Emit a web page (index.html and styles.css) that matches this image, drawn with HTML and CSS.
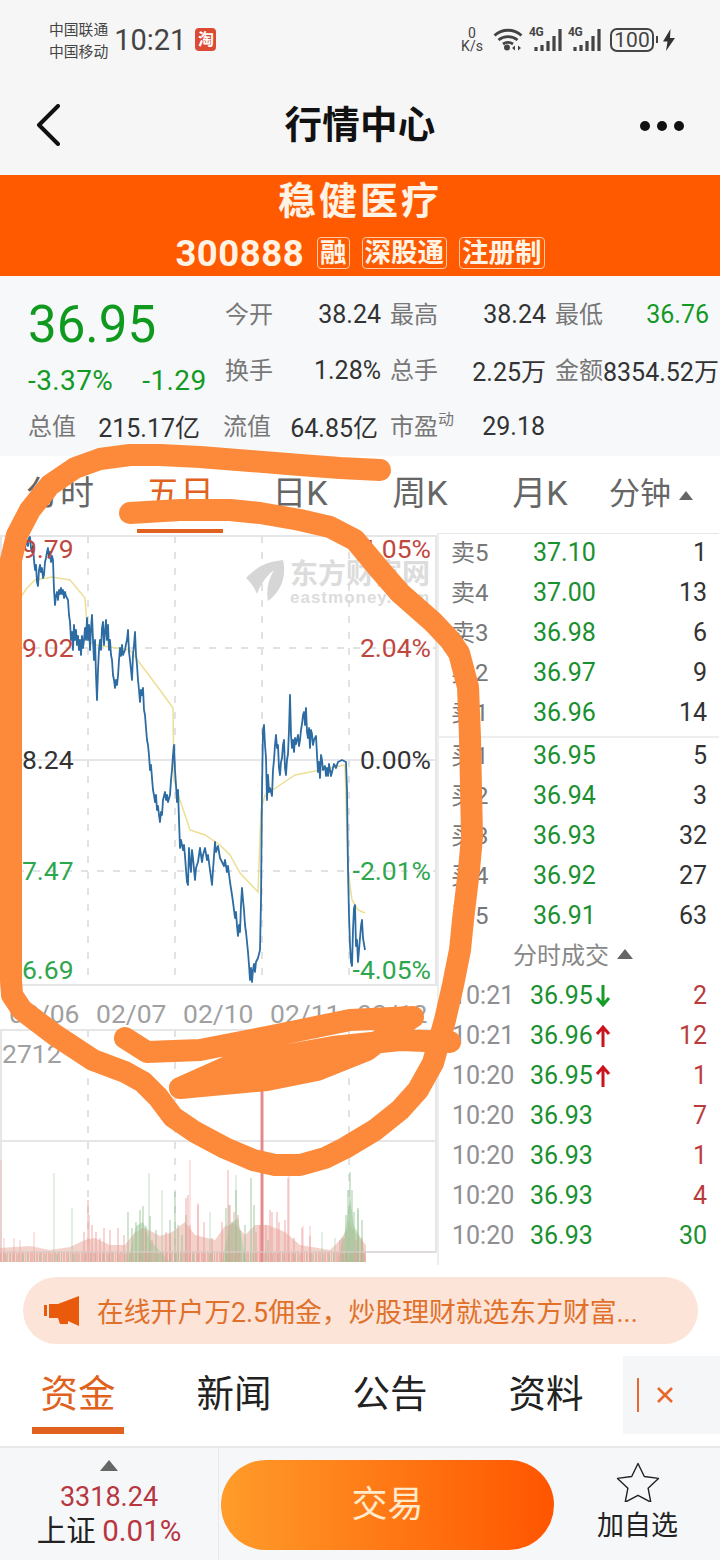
FILE: index.html
```html
<!DOCTYPE html>
<html lang="zh-CN">
<head>
<meta charset="utf-8">
<title>行情中心</title>
<link rel="stylesheet" href="styles.css">
</head>
<body>
<div class="page">
  <header class="status">
    <div class="carriers"><span>中国联通</span><span>中国移动</span></div>
    <div class="clock">10:21</div>
    <div class="tao">淘</div>
    <div class="status-right">
      <div class="speed"><span>0</span><span>K/s</span></div>
      <svg class="wifi" viewBox="0 0 30 23" width="30" height="23"><path d="M1.500 7.500C9 .5 21 .5 28.500 7.500M5.500 12C11 7.500 19 7.500 24.500 12M10 16C13 14 17 14 20 16" fill="none" stroke="#444" stroke-width="2.800"/><circle cx="14" cy="19.500" r="3" fill="#444"/><path d="M22 17.500l-3 2.500 3 2.500zM25 17.500l3 2.500-3 2.500z" fill="#444"/></svg>
      <div class="signal"><span class="g4">4G</span><svg viewBox="0 0 33 23" width="33" height="23"><path d="M7 23v-4M13 23v-6M19 23v-10M25 23v-15M31 23V1" stroke="#444" stroke-width="3.200" fill="none"/></svg></div>
      <div class="signal"><span class="g4">4G</span><svg viewBox="0 0 33 23" width="33" height="23"><path d="M7 23v-4M13 23v-6M19 23v-10M25 23v-15M31 23V1" stroke="#444" stroke-width="3.200" fill="none"/></svg></div>
      <div class="battery">100</div><div class="nub"></div>
      <svg class="bolt" viewBox="0 0 12 22" width="12" height="22"><path d="M7.500 0L0 12.500h4.500L3 22l9-13H7z" fill="#333"/></svg>
    </div>
  </header>

  <nav class="nav">
    <svg class="back" viewBox="0 0 24 42" width="24" height="42"><path d="M22 2L3 21l19 19" fill="none" stroke="#111" stroke-width="4" stroke-linecap="round" stroke-linejoin="round" /></svg>
    <h1 class="title">行情中心</h1>
    <div class="dots"><i></i><i></i><i></i></div>
  </nav>

  <section class="stock">
    <div class="stock-name">稳健医疗</div>
    <div class="stock-sub"><span class="code">300888</span><span class="badge">融</span><span class="badge">深股通</span><span class="badge">注册制</span></div>
  </section>

  <section class="quote">
    <div class="quote-top">
      <div class="price-box">
        <div class="price">36.95</div>
        <div class="change"><span>-3.37%</span><span>-1.29</span></div>
      </div>
      <div class="stats">
        <div class="stat"><label>今开</label><b>38.24</b></div>
        <div class="stat"><label>最高</label><b>38.24</b></div>
        <div class="stat last"><label>最低</label><b class="up">36.76</b></div>
        <div class="stat"><label>换手</label><b>1.28%</b></div>
        <div class="stat"><label>总手</label><b>2.25万</b></div>
        <div class="stat over"><label>金额</label><b>8354.52万</b></div>
      </div>
    </div>
    <div class="quote-bottom">
      <div class="stat s1"><label>总值</label><b>215.17亿</b></div>
      <div class="stat s2"><label>流值</label><b>64.85亿</b></div>
      <div class="stat s3"><label>市盈<sup>动</sup></label><b>29.18</b></div>
    </div>
  </section>

  <div class="tabs">
    <div class="tab">分时</div>
    <div class="tab active">五日</div>
    <div class="tab">日K</div>
    <div class="tab">周K</div>
    <div class="tab">月K</div>
    <div class="tab more">分钟<i class="tri"></i></div>
  </div>

  <main class="main">
    <svg class="chart" viewBox="0 533 438 732" width="438" height="732">
      <g class="grid">
        <rect x="1" y="536" width="435" height="449"/>
        <rect x="1" y="1030" width="435" height="222"/>
        <path d="M1 760H436M1 1141H436"/>
      </g>
      <path class="dash" d="M88 536V985M175 536V985M262 536V985M349 536V985M1 648H436M1 871H436M88 1030V1252M175 1030V1252M262 1030V1252M349 1030V1252"/>
      <g class="mark">
        <path d="M246 578C256 568 264 562 283 560C287 576 281 592 268 601C266 590 268 580 274 570C264 578 259 588 257 594C254 586 250 582 246 578Z"/>
        <text class="mark-cn" x="290" y="584">东方财富网</text>
        <text class="mark-en" x="290" y="603">eastmoney.com</text>
      </g>
      <polyline class="avg" points="20,598 27,588 35,580 52,577 70,580 85,598 88,640 95,645 110,647 130,650 145,670 160,690 173,708 174,780 180,800 190,830 205,835 220,845 230,855 240,873 258,892 261,810 265,795 280,785 295,775 320,770 345,765 348,870 352,900 358,910 365,913"/>
      <polyline class="line" points="20,570 21,560 22,555 23,542 24,538 25,548 26,544 27,540 28,546 29,538 30,537 31,548 32,552 33,546 34,560 35,570 36,565 37,582 38,586 39,570 40,565 41,572 42,568 43,578 44,575 45,562 46,558 47,552 48,548 49,558 50,552 51,562 52,556 53,560 54,590 55,605 56,596 57,592 58,600 59,590 60,594 61,588 62,594 63,590 64,598 65,592 66,596 68,600 69,615 70,622 71,640 72,632 73,650 74,625 75,640 76,630 77,645 78,636 79,650 80,640 81,655 82,636 83,648 84,640 85,628 86,640 87,618 88,640 89,625 90,650 91,628 92,615 93,640 94,660 95,640 96,675 97,700 98,670 99,650 100,640 101,650 102,628 103,622 104,645 105,632 106,620 107,640 108,625 109,650 110,640 111,655 112,660 113,675 114,680 115,688 116,680 117,685 118,676 119,660 120,648 121,656 122,645 123,655 125,650 126,644 127,640 128,630 129,652 130,660 131,670 132,680 133,655 134,645 135,632 136,655 137,665 138,680 139,690 140,702 141,690 142,695 143,688 144,710 145,715 146,728 147,740 148,745 149,755 150,770 151,765 152,778 153,790 154,795 155,802 156,795 157,810 158,806 159,815 160,822 161,812 162,815 163,800 165,792 166,800 167,795 168,802 170,795 171,780 172,770 173,755 174,745 175,770 176,785 177,802 178,790 179,820 180,848 181,840 183,850 184,845 185,856 186,870 187,882 188,885 189,848 190,862 191,872 192,850 193,858 195,880 196,868 198,862 200,848 202,862 203,855 205,848 207,860 208,855 210,870 212,885 213,870 214,856 215,842 216,852 218,846 220,858 222,862 224,866 225,860 227,872 228,866 230,882 232,895 233,902 235,918 236,912 237,926 238,936 239,925 240,932 241,905 242,888 243,900 244,910 245,925 246,932 248,952 249,965 250,980 251,968 252,982 253,970 254,964 255,972 256,962 258,958 260,950 261,900 262,790 263,730 264,725 265,745 266,758 267,800 268,775 269,792 270,788 272,796 273,770 274,760 275,745 276,735 277,748 278,745 279,768 280,775 281,762 282,758 283,745 284,740 285,768 286,775 287,760 288,754 289,730 290,695 291,735 292,748 293,740 294,752 295,738 296,744 298,735 299,746 300,740 301,730 302,724 303,715 304,712 305,725 306,708 307,732 308,738 309,728 310,748 311,730 312,734 313,745 314,740 316,736 317,755 318,772 319,762 320,778 321,755 322,760 323,770 325,766 326,776 327,768 328,776 329,764 330,770 331,776 333,768 334,764 336,768 338,762 342,760 346,762 347,790 348,870 349,915 350,945 351,962 352,966 353,930 354,908 355,905 356,946 357,940 358,962 359,950 360,938 361,926 362,920 363,938 364,944 365,950"/>
      <polygon class="hills-r" points="0,1262 0,1248 30,1246 50,1250 70,1247 85,1240 95,1238 110,1245 125,1245 135,1232 145,1228 160,1236 172,1232 185,1222 195,1235 215,1240 225,1226 235,1224 245,1235 255,1225 268,1225 285,1232 300,1245 330,1250 340,1240 350,1225 358,1236 366,1245 366,1262"/>
      <polygon class="hills-g" points="128,1262 136,1226 143,1222 150,1240 170,1262 222,1262 230,1224 238,1218 246,1262 338,1262 346,1226 350,1198 354,1226 362,1240 366,1262"/>
      <path class="vol-base" d="M0 1257H366"/>
      <path class="vol-base2" d="M0 1258H366"/>
      <path class="hill-g" d="M128 1262V1212M132 1262V1228M136 1262V1222M140 1262V1210M143 1262V1206M146 1262V1226M150 1262V1216M156 1262V1230M170 1262V1220M175 1262V1192M178 1262V1225M182 1262V1235M186 1262V1215M226 1262V1208M229 1262V1205M232 1262V1222M236 1262V1190M240 1262V1230M245 1262V1225M251 1262V1178M254 1262V1205M268 1262V1240M342 1262V1238M346 1262V1215M348 1262V1190M350 1262V1172M352 1262V1190M354 1262V1212M358 1262V1208M362 1262V1220"/>
      <path class="hill-r" d="M84 1262V1232M88 1262V1200M89 1262V1215M92 1262V1225M96 1262V1232M100 1262V1238M104 1262V1228M110 1262V1230M118 1262V1228M124 1262V1235M142 1262V1228M146 1262V1232M152 1262V1240M166 1262V1232M170 1262V1235M186 1262V1198M188 1262V1195M190 1262V1225M198 1262V1205M204 1262V1222M212 1262V1238M222 1262V1222M228 1262V1170M230 1262V1205M234 1262V1212M238 1262V1215M256 1262V1232M260 1262V1225M266 1262V1225M270 1262V1210M272 1262V1212M277 1262V1212M279 1262V1222M285 1262V1220M288 1262V1178M294 1262V1238M302 1262V1228M310 1262V1236M340 1262V1240M344 1262V1238M356 1262V1240M362 1262V1238"/>
      <path class="thin-g" d="M54 1262V1173M72 1262V1208M149 1262V1173M162 1262V1190M210 1262V1212M236 1262V1175M322 1262V1232M335 1262V1238M358 1262V1210"/>
      <path class="thin-r" d="M1 1262V1160M4 1262V1238M14 1262V1238M20 1262V1240M34 1262V1232M190 1262V1160M198 1262V1203M303 1262V1226M310 1262V1226M289 1262V1176"/>
      <path class="vol-spike" d="M262 1262V1090"/>
      <path class="vol-line" d="M1 1252H436"/>
      <text class="lbl red" x="7" y="558">39.79</text>
      <text class="lbl red" x="7" y="657">39.02</text>
      <text class="lbl dark" x="7" y="769">38.24</text>
      <text class="lbl green" x="7" y="880">37.47</text>
      <text class="lbl green" x="7" y="979">36.69</text>
      <text class="lbl red end" x="431" y="558">4.05%</text>
      <text class="lbl red end" x="431" y="657">2.04%</text>
      <text class="lbl dark end" x="431" y="769">0.00%</text>
      <text class="lbl green end" x="431" y="880">-2.01%</text>
      <text class="lbl green end" x="431" y="979">-4.05%</text>
      <text class="lbl gray" x="9" y="1023">02/06</text>
      <text class="lbl gray" x="96" y="1023">02/07</text>
      <text class="lbl gray" x="183" y="1023">02/10</text>
      <text class="lbl gray" x="270" y="1023">02/11</text>
      <text class="lbl gray" x="357" y="1023">02/12</text>
      <text class="lbl gray" x="2" y="1063">2712</text>
    </svg>

    <aside class="book">
      <div class="row"><label>卖5</label><b>37.10</b><em>1</em></div>
      <div class="row"><label>卖4</label><b>37.00</b><em>13</em></div>
      <div class="row"><label>卖3</label><b>36.98</b><em>6</em></div>
      <div class="row"><label>卖2</label><b>36.97</b><em>9</em></div>
      <div class="row"><label>卖1</label><b>36.96</b><em>14</em></div>
      <div class="book-sep"></div>
      <div class="row"><label>买1</label><b>36.95</b><em>5</em></div>
      <div class="row"><label>买2</label><b>36.94</b><em>3</em></div>
      <div class="row"><label>买3</label><b>36.93</b><em>32</em></div>
      <div class="row"><label>买4</label><b>36.92</b><em>27</em></div>
      <div class="row"><label>买5</label><b>36.91</b><em>63</em></div>
      <div class="trades-head"><span>分时成交</span><i class="tri"></i></div>
      <div class="trade"><time>10:21</time><b>36.95</b><svg class="arrow" viewBox="0 0 16 24" width="16" height="24"><path d="M8 1V21M2 14l6 7 6-7" fill="none" stroke="#169a2a" stroke-width="3"/></svg><em class="r">2</em></div>
      <div class="trade"><time>10:21</time><b>36.96</b><svg class="arrow" viewBox="0 0 16 24" width="16" height="24"><path d="M8 23V3M2 10l6-7 6 7" fill="none" stroke="#c9141c" stroke-width="3"/></svg><em class="r">12</em></div>
      <div class="trade"><time>10:20</time><b>36.95</b><svg class="arrow" viewBox="0 0 16 24" width="16" height="24"><path d="M8 23V3M2 10l6-7 6 7" fill="none" stroke="#c9141c" stroke-width="3"/></svg><em class="r">1</em></div>
      <div class="trade"><time>10:20</time><b>36.93</b><em class="r">7</em></div>
      <div class="trade"><time>10:20</time><b>36.93</b><em class="r">1</em></div>
      <div class="trade"><time>10:20</time><b>36.93</b><em class="r">4</em></div>
      <div class="trade"><time>10:20</time><b>36.93</b><em class="g">30</em></div>
    </aside>
  </main>

  <div class="promo">
    <svg class="horn" viewBox="0 0 36 30" width="36" height="30"><path d="M0 9h3v11H0zM5 8h9L35 0v30L24 25v3h-8l-2-6H5z" fill="#ea5a0c"/></svg>
    <span>在线开户万2.5佣金&#xFF0C;炒股理财就选东方财富...</span>
  </div>

  <div class="subtabs">
    <div class="subtab active">资金</div>
    <div class="subtab">新闻</div>
    <div class="subtab">公告</div>
    <div class="subtab">资料</div>
    <div class="close"><i></i><svg viewBox="0 0 18 18" width="18" height="18"><path d="M2 2l14 14M16 2L2 16" stroke="#e8692c" stroke-width="2.600" fill="none"/></svg></div>
  </div>

  <footer class="footer">
    <div class="index">
      <i class="tri big"></i>
      <div class="index-val">3318.24</div>
      <div class="index-line">上证 <span>0.01%</span></div>
    </div>
    <div class="trade-wrap"><button class="trade-btn">交易</button></div>
    <div class="fav">
      <svg viewBox="0 0 44 40" width="44" height="40"><path d="M22 1.500l6.300 13 14.200 1.900-10.400 9.800 2.700 14-12.800-6.900-12.800 6.900 2.700-14L1.500 16.400l14.200-1.900z" fill="none" stroke="#222" stroke-width="1.400" stroke-linejoin="round"/></svg>
      <span>加自选</span>
    </div>
  </footer>

  <svg class="scribble" viewBox="0 0 720 1560" width="720" height="1560">
    <path class="ink" d="M380 470L340 468L300 465L250 461L200 457L160 455L130 455L100 459L75 468L50 485L30 510L17 535L11 560V980L12 995L22 1010L55 1035L93 1060L125 1072L143 1082L158 1097L173 1117L195 1132L225 1148L253 1160L275 1165L300 1165L325 1158L345 1148L375 1130L400 1110L418 1090L433 1063L445 1020L453 985L460 950L463 920L469 870L472 837L471 787L470 737L468 687L459 653L450 640L433 622L400 593L380 570L355 540L330 527L300 520L260 513L230 510L180 510L130 513"/>
    <path class="ink" d="M125 1038L147 1052L200 1050L267 1037L350 1020L413 1017L393 1030L367 1050L317 1070L267 1080L180 1088L227 1067L260 1060L333 1047L400 1040L450 1042"/>
  </svg>
</div>
</body>
</html>
```
FILE: styles.css
```css
* { box-sizing: border-box; }
html, body { margin: 0; padding: 0; }
body { background: #fff; font-family: Roboto, "Noto Sans CJK SC", sans-serif; color: #333; }
.page { position: relative; width: 720px; height: 1560px; overflow: hidden; background: #fff; }
label, b, em, time { font-weight: 400; font-style: normal; }

.status { height: 85px; background: #f6f6f6; display: flex; align-items: center; padding: 0 45px 0 49px; color: #444; }
.carriers { display: flex; flex-direction: column; gap: 4px; font-size: 14.800px; line-height: 18px; margin-top: -4px; }
.clock { font-size: 29px; margin-left: 6px; margin-top: -5px; }
.tao { width: 21px; height: 23px; margin-left: 9px; margin-top: -6px; background: #dc4a34; border-radius: 4px; color: #fff; font-size: 16px; line-height: 23px; text-align: center; font-weight: 700; }
.status-right { margin-left: auto; display: flex; align-items: center; margin-top: -6px; }
.speed { display: flex; flex-direction: column; align-items: center; font-size: 14px; line-height: 13px; margin-right: 9px; width: 24px; }
.wifi { margin-right: 6px; }
.signal { position: relative; width: 33px; height: 23px; margin-right: 6px; }
.signal svg { display: block; }
.g4 { position: absolute; left: 0; top: -3px; font-size: 12px; font-weight: 700; letter-spacing: -.5px; line-height: 14px; background: #f6f6f6; }
.battery { width: 44px; height: 24px; margin-left: 3px; border: 2px solid #444; border-radius: 7px; font-size: 21px; line-height: 20px; text-align: center; }
.nub { width: 2px; height: 7px; background: #444; margin: 0 5px 0 2px; }

.nav { height: 90px; background: #f6f6f6; display: flex; align-items: center; justify-content: space-between; padding: 0 36px 10px 36px; position: relative; }
.title { position: absolute; left: 0; right: 0; top: 17px; margin: 0; text-align: center; font-size: 37.500px; line-height: 46px; font-weight: 700; color: #111; letter-spacing: .3px; }
.dots { display: flex; gap: 7px; margin-top: 2px; }
.dots i { width: 10px; height: 10px; border-radius: 50%; background: #111; }

.stock { height: 101px; background: #ff5a00; color: #fff3e6; display: flex; flex-direction: column; align-items: center; }
.stock-name { font-size: 38px; font-weight: 700; line-height: 52px; letter-spacing: 3px; }
.stock-sub { display: flex; align-items: center; gap: 12px; height: 36px; margin-top: 8px; }
.code { font-size: 36.500px; font-weight: 700; letter-spacing: .5px; margin-right: 1px; }
.badge { border: 1px solid #ffc9a6; border-radius: 4px; font-size: 26.500px; font-weight: 700; line-height: 30px; height: 32px; padding: 0 2px; }

.quote { height: 180px; background: #f7f8fa; }
.quote-top { display: flex; height: 122px; }
.price-box { width: 225px; padding-left: 28px; }
.price { font-size: 51px; line-height: 60px; color: #0f9a1f; margin-top: 19px; }
.change { display: flex; gap: 29px; font-size: 28px; line-height: 30px; letter-spacing: .4px; color: #139a25; margin-top: 11px; white-space: nowrap; }
.stats { width: 495px; display: grid; grid-template-columns: 165px 165px 165px; grid-auto-rows: 56px; padding-top: 10px; }
.stat { display: flex; justify-content: space-between; align-items: center; font-size: 25px; color: #333; padding-right: 9px; }
.stat label { font-size: 24px; color: #777; margin-bottom: 4px; }
.stat .up { color: #139a25; }
.stat.last { padding-right: 11px; }
.stat.over { padding-right: 2px; white-space: nowrap; }
.stat sup { font-size: 16px; line-height: 0; vertical-align: 10px; }
.quote-bottom { display: flex; padding-left: 28px; height: 56px; }
.s1 { width: 172px; padding-right: 0; }
.s2 { width: 167px; padding-right: 12px; margin-left: 23px; }
.s3 { width: 155px; padding-right: 0; }

.tabs { height: 77px; display: flex; background: #fff; }
.tab { width: 120px; display: flex; justify-content: center; align-items: center; font-size: 34px; color: #666; position: relative; padding-bottom: 8px; }
.tab.active { color: #e0621e; }
.tab.active::after { content: ""; position: absolute; left: 17px; width: 86px; bottom: 0; height: 4px; background: #e0621e; }
.tab.more { font-size: 31px; gap: 8px; margin-left: -9px; }
.tri { display: inline-block; width: 0; height: 0; border-left: 8px solid transparent; border-right: 8px solid transparent; border-bottom: 10px solid #666; }
.tab .tri { border-left-width: 7px; border-right-width: 7px; border-bottom-width: 9px; margin-top: 10px; }

.main { display: flex; height: 732px; }
.chart { display: block; flex: none; }
.grid rect, .grid path { fill: none; stroke: #e6e6e8; stroke-width: 2; }
.dash { fill: none; stroke: #e2e2e4; stroke-width: 2; stroke-dasharray: 7 9; }
.mark path { fill: #d6d6d6; }
.mark-cn { font-size: 28px; font-weight: 700; fill: #dcdcdc; font-family: "Noto Sans CJK SC", sans-serif; }
.mark-en { font-size: 17px; font-weight: 700; fill: #dcdcdc; letter-spacing: 1px; font-family: "Liberation Sans", sans-serif; }
.line { fill: none; stroke: #2c6ca3; stroke-width: 1.800; stroke-linejoin: round; }
.avg { fill: none; stroke: #ecdf94; stroke-width: 1.500; }
.hills-r { fill: #ecb4aa; opacity: .6; }
.hills-g { fill: #aacfa4; opacity: .6; }
.vol-base { fill: none; stroke: #e89a90; stroke-width: 10; stroke-dasharray: 2 1 3 1 1 1; opacity: .5; }
.vol-base2 { fill: none; stroke: #a8c8a0; stroke-width: 8; stroke-dasharray: 1 4 2 3 1 6; opacity: .6; }
.hill-g { fill: none; stroke: #8cc08c; stroke-width: 1.600; opacity: .5; }
.hill-r { fill: none; stroke: #ec9a96; stroke-width: 1.600; opacity: .5; }
.thin-g { fill: none; stroke: #8cc08c; stroke-width: 1; opacity: .5; }
.thin-r { fill: none; stroke: #ec9a96; stroke-width: 1; opacity: .55; }
.vol-spike { fill: none; stroke: #e48a8c; stroke-width: 3; }
.vol-line { fill: none; stroke: #d8d4d0; stroke-width: 1.500; opacity: .7; }
.lbl { font-size: 26.500px; }
.lbl.end { text-anchor: end; }
.red { fill: #c0473e; }
.dark { fill: #333; }
.green { fill: #2ea64e; }
.gray { fill: #a0a0a2; }

.book { width: 282px; margin-left: -1px; border-left: 2px solid #eeeeee; border-top: 1px solid #e8e8e8; height: 732px; font-size: 25px; }
.row { height: 40px; display: flex; align-items: center; padding: 0 12px 3px 12px; }
.row label { width: 82px; font-size: 24px; color: #777; margin-bottom: 4px; }
.row b { color: #1b9030; }
.row em { margin-left: auto; color: #333; }
.book-sep { height: 2px; margin-top: 2px; margin-bottom: -1px; background: #eeeeee; }
.trades-head { height: 40px; margin-top: -1px; display: flex; align-items: center; justify-content: center; gap: 8px; font-size: 24px; color: #888; padding: 0 12px 4px 0; }
.trades-head span { margin-bottom: 2px; }
.trades-head .tri { border-bottom-color: #666; }
.trade { height: 40px; display: flex; align-items: center; padding: 0 12px 1px 13px; }
.trade time { width: 78px; color: #8e8e93; }
.trade b { color: #1b9030; }
.trade em { margin-left: auto; }
.arrow { margin-left: 2px; }
.r { color: #b93c3c; }
.g { color: #1b9030; }

.promo { margin: 12px 22px 0 23px; height: 67px; border-radius: 34px; background: #fce4d8; display: flex; align-items: center; padding-left: 21px; color: #e0702a; font-size: 26.800px; white-space: nowrap; }
.horn { margin-right: 17px; flex: none; }

.subtabs { height: 78px; margin-top: 12px; display: flex; position: relative; padding-left: 32px; }
.subtab { width: 92px; margin-right: 64px; font-size: 37.500px; line-height: 76px; text-align: center; color: #222; position: relative; }
.subtab.active { color: #e0621e; }
.subtab.active::after { content: ""; position: absolute; left: 0; right: 0; bottom: 0; height: 7px; background: #e0621e; }
.close { position: absolute; right: 0; top: 0; width: 97px; height: 78px; background: #f5f6f8; display: flex; align-items: center; padding-left: 14px; gap: 17px; }
.close i { width: 1.500px; height: 34px; background: #e8692c; }

.footer { height: 114px; margin-top: 12px; background: #f6f7f9; border-top: 2px solid #e8e8e8; display: flex; }
.index { width: 219px; border-right: 1px solid #e8e8ea; display: flex; flex-direction: column; align-items: center; padding-top: 12px; }
.tri.big { border-bottom-color: #666; border-left-width: 9px; border-right-width: 9px; border-bottom-width: 11px; }
.index-val { font-size: 27px; line-height: 28px; color: #b7363f; margin-top: 12px; }
.index-line { font-size: 29.500px; line-height: 34px; color: #222; font-family: "Noto Sans CJK SC", sans-serif; }
.index-line span { font-family: Roboto, sans-serif; color: #b7363f; }
.trade-wrap { width: 336px; padding: 12px 0 0 2px; }
.trade-btn { width: 333px; height: 90px; border: 0; border-radius: 45px; background: linear-gradient(90deg, #ff9c2a, #ff5500); color: #ffeacc; font-size: 36px; line-height: 80px; font-family: "Noto Sans CJK SC", sans-serif; padding: 0 0 8px; }
.fav { flex: 1; display: flex; flex-direction: column; align-items: center; padding: 14px 0 0 0; font-size: 27px; line-height: 36px; color: #222; gap: 6px; }

.scribble { position: absolute; left: 0; top: 0; pointer-events: none; }
.ink { fill: none; stroke: #fd8a3a; stroke-width: 22; stroke-linecap: round; stroke-linejoin: round; }
```
